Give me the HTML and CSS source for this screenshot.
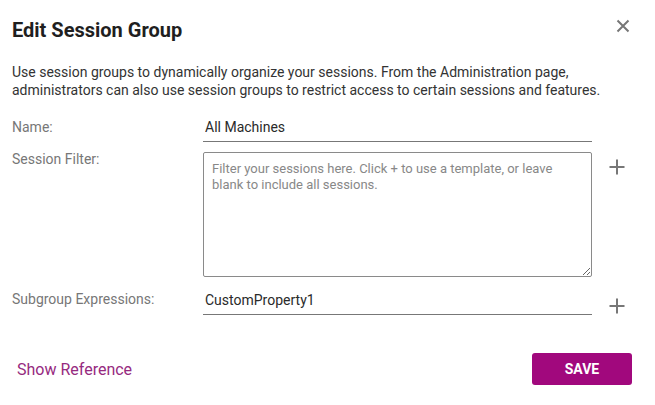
FILE: index.html
```html
<!DOCTYPE html>
<html>
<head>
<meta charset="utf-8">
<link rel="stylesheet" href="styles.css">
</head>
<body>
<div class="dialog">
  <div class="header">
    <h1 class="title">Edit Session Group</h1>
    <button class="close" aria-label="Close">
      <svg width="14" height="14" viewBox="0 0 14 14"><path d="M1.5 1.5 L12.5 12.5 M12.5 1.5 L1.5 12.5" stroke="#777" stroke-width="2" fill="none"/></svg>
    </button>
  </div>
  <p class="desc">Use session groups to dynamically organize your sessions. From the Administration page, administrators can also use session groups to restrict access to certain sessions and features.</p>
  <div class="form">
    <div class="label label-name">Name:</div>
    <div class="field field-name"><input class="text-input" type="text" value="All Machines"></div>
    <div class="spacer"></div>

    <div class="label label-filter">Session Filter:</div>
    <div class="field"><textarea class="area" placeholder="Filter your sessions here. Click + to use a template, or leave blank to include all sessions."></textarea></div>
    <div class="plus plus-filter"><svg width="16" height="16" viewBox="0 0 16 16"><path d="M8 0.5 V15.5 M0.5 8 H15.5" stroke="#777" stroke-width="2" fill="none"/></svg></div>

    <div class="label label-sub">Subgroup Expressions:</div>
    <div class="field field-sub"><input class="text-input" type="text" value="CustomProperty1"></div>
    <div class="plus plus-sub"><svg width="16" height="16" viewBox="0 0 16 16"><path d="M8 0.5 V15.5 M0.5 8 H15.5" stroke="#777" stroke-width="2" fill="none"/></svg></div>
  </div>
  <div class="footer">
    <a class="link" href="#">Show Reference</a>
    <button class="save">SAVE</button>
  </div>
</div>
</body>
</html>
```
FILE: styles.css
```css
html, body {
  margin: 0;
  padding: 0;
  background: #fff;
}
body {
  font-family: Roboto, "Liberation Sans", sans-serif;
  color: #333;
  width: 655px;
  height: 405px;
  overflow: hidden;
}
.header {
  display: flex;
  justify-content: space-between;
  align-items: flex-start;
  padding: 18px 25px 0 12px;
}
.title {
  margin: 0;
  font-size: 20px;
  line-height: 24px;
  font-weight: 700;
  color: #1f1f1f;
}
.close {
  border: 0;
  background: none;
  padding: 0;
  margin-top: 1px;
  width: 14px;
  height: 14px;
  cursor: pointer;
}
.close svg { display: block; }
.desc {
  margin: 21px 0 0 12px;
  width: 600px;
  font-size: 14px;
  line-height: 18px;
  color: #333;
}
.form {
  display: grid;
  grid-template-columns: 191px 389px 50px;
  margin: 13px 0 0 12px;
}
.label {
  font-size: 14px;
  line-height: 18px;
  color: #777;
}
.label-name { padding-top: 6px; }
.label-filter { margin-top: -2px; }
.label-sub { padding-top: 13px; }
.text-input {
  display: block;
  box-sizing: border-box;
  width: 100%;
  height: 30px;
  border: 0;
  border-bottom: 1px solid #777;
  padding: 0 2px;
  font-family: Roboto, "Liberation Sans", sans-serif;
  font-size: 14px;
  color: #2a2a2a;
  outline: none;
  background: transparent;
}
.field-name { margin-bottom: 10px; }
.field-sub { margin-top: 8px; }
.area {
  display: block;
  box-sizing: border-box;
  width: 100%;
  height: 125px;
  border: 1px solid #8a8a8a;
  border-radius: 2px;
  padding: 8px 8px;
  font-family: Roboto, "Liberation Sans", sans-serif;
  font-size: 13px;
  line-height: 16px;
  color: #333;
  resize: vertical;
  outline: none;
}
.area::placeholder { color: #888; }
.plus svg { display: block; }
.plus-filter { padding: 7px 0 0 17px; }
.plus-sub { padding: 21px 0 0 17px; }
.footer {
  display: flex;
  justify-content: space-between;
  align-items: center;
  padding: 0 23px 0 17px;
  margin-top: 38px;
}
.link {
  font-size: 16px;
  color: #962a80;
  text-decoration: none;
}
.save {
  width: 100px;
  height: 32px;
  border: 0;
  border-radius: 3px;
  background: #a1087d;
  color: #fff;
  font-family: Roboto, "Liberation Sans", sans-serif;
  font-weight: 700;
  font-size: 14px;
  cursor: pointer;
}
```
